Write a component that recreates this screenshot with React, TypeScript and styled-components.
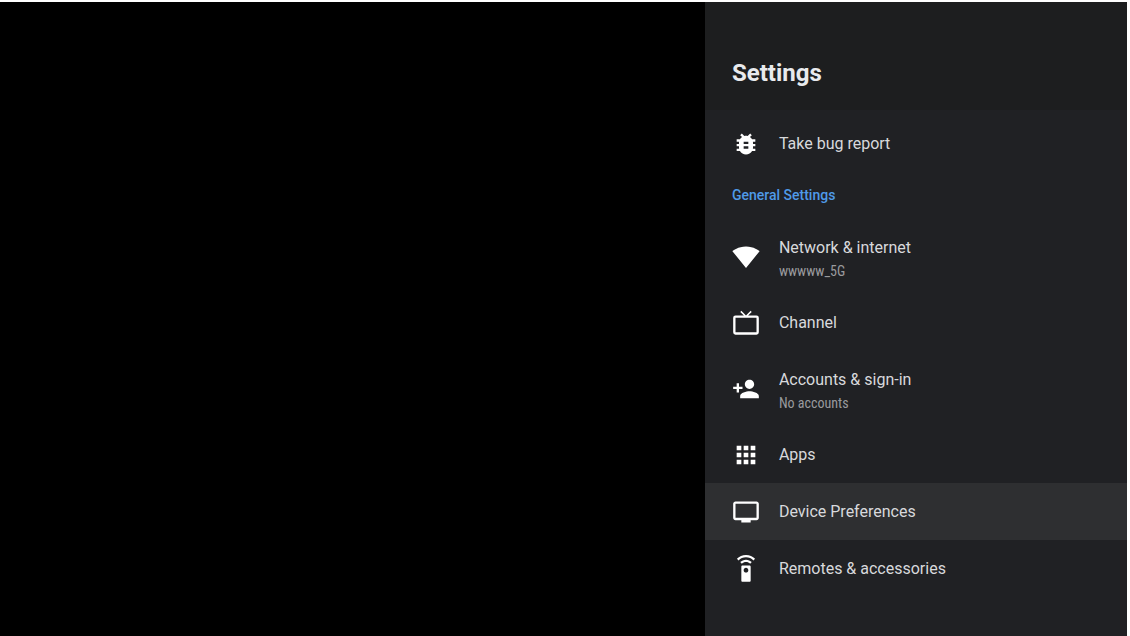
import React from 'react';
import styled, { createGlobalStyle } from 'styled-components';

const GlobalStyle = createGlobalStyle`
  *, *::before, *::after { box-sizing: border-box; }
  html, body, #root { height: 100%; margin: 0; }
  body {
    background: #ffffff;
    font-family: Roboto, "Liberation Sans", sans-serif;
    -webkit-font-smoothing: antialiased;
  }
`;

const Screen = styled.div`
  display: flex;
  min-height: 100%;
  border: solid #ffffff;
  border-width: 2px 3px 0 0;
`;

const Stage = styled.main`
  flex: 167;
  background: #000000;
`;

const Panel = styled.aside`
  display: flex;
  flex-direction: column;
  flex: 100;
  background: #202124;
`;

const Header = styled.header`
  padding: 55px 27px 21px;
  background: #1d1e1f;
`;

const Title = styled.h1`
  margin: 0;
  color: #e8eaed;
  font-size: 24px;
  font-weight: 700;
  line-height: 32px;
`;

const Menu = styled.nav`
  padding: 5px 0;
`;

const SectionTitle = styled.h2`
  margin: 0;
  padding: 0 27px;
  color: #4f9ae8;
  font-size: 14px;
  font-weight: 500;
  line-height: 47px;
`;

const Row = styled.button<{ $tall?: boolean; $focused?: boolean }>`
  display: flex;
  align-items: center;
  gap: 19px;
  width: 100%;
  height: ${(p) => (p.$tall ? 75 : 57)}px;
  padding: 0 27px;
  border: 0;
  background: ${(p) => (p.$focused ? '#2e2f31' : 'transparent')};
  color: #d8d9dc;
  font-family: inherit;
  text-align: left;
`;

const Icon = styled.svg`
  flex: none;
  width: 28px;
  height: 28px;
  fill: #ffffff;
`;

const Texts = styled.span<{ $tall?: boolean }>`
  display: flex;
  flex-direction: column;
  padding-top: ${(p) => (p.$tall ? 5 : 0)}px;
`;

const Label = styled.span`
  font-size: 16px;
  line-height: 24px;
`;

const Summary = styled.span`
  color: #9a9b9e;
  font-family: "Roboto Condensed", Roboto, sans-serif;
  font-size: 14px;
  line-height: 22px;
`;

const icons = {
  bug: 'M20 8h-2.81a5.985 5.985 0 0 0-1.82-1.96L17 4.41 15.59 3l-2.17 2.17C12.96 5.06 12.49 5 12 5s-.96.06-1.41.17L8.41 3 7 4.41l1.62 1.63C7.88 6.55 7.26 7.22 6.81 8H4v2h2.09c-.05.33-.09.66-.09 1v1H4v2h2v1c0 .34.04.67.09 1H4v2h2.81c1.04 1.79 2.97 3 5.19 3s4.15-1.21 5.19-3H20v-2h-2.09c.05-.33.09-.66.09-1v-1h2v-2h-2v-1c0-.34-.04-.67-.09-1H20V8zm-6 8h-4v-2h4v2zm0-4h-4v-2h4v2z',
  wifi: 'M12.01 21.49L23.64 7c-.45-.34-4.93-4-11.64-4C5.28 3 .81 6.66.36 7l11.63 14.49.01.01.01-.01z',
  channel: 'M21 5.6h-7.2l3.1-3.1-.9-.9-4 4-4-4-.9.9 3.1 3.1H3a2 2 0 0 0-2 2V20a2 2 0 0 0 2 2h18a2 2 0 0 0 2-2V7.600a2 2 0 0 0-2-2zM21 20H3V7.600h18z',
  account: 'M15 12c2.21 0 4-1.790 4-4s-1.790-4-4-4-4 1.790-4 4 1.790 4 4 4zm-9-2V7H4v3H1v2h3v3h2v-3h3v-2H6zm9 4c-2.670 0-8 1.340-8 4v2h16v-2c0-2.660-5.330-4-8-4z',
  apps: 'M4 8h4V4H4v4zm6 12h4v-4h-4v4zm-6 0h4v-4H4v4zm0-6h4v-4H4v4zm6 0h4v-4h-4v4zm6-10v4h4V4h-4zm-6 4h4V4h-4v4zm6 6h4v-4h-4v4zm0 6h4v-4h-4v4z',
  device: 'M21 3H3c-1.100 0-2 .9-2 2v12c0 1.100.9 2 2 2h5v2h8v-2h5c1.100 0 2-.9 2-2V5c0-1.100-.9-2-2-2zm0 14H3V5h18v12z',
  remote: 'M15 9H9c-.55 0-1 .45-1 1v12c0 .55.45 1 1 1h6c.55 0 1-.45 1-1V10c0-.55-.45-1-1-1zm-3 6c-1.100 0-2-.9-2-2s.9-2 2-2 2 .9 2 2-.9 2-2 2zM7.050 6.050l1.410 1.410C9.370 6.560 10.620 6 12 6s2.630.56 3.540 1.460l1.410-1.410C15.680 4.780 13.930 4 12 4s-3.680.78-4.950 2.050zM12 0C8.960 0 6.210 1.230 4.220 3.220l1.410 1.410C7.260 3.010 9.510 2 12 2s4.740 1.010 6.360 2.640l1.410-1.410C17.790 1.230 15.040 0 12 0z',
};

interface ItemProps {
  icon: keyof typeof icons;
  label: string;
  summary?: string;
  focused?: boolean;
}

function Item({ icon, label, summary, focused }: ItemProps) {
  return (
    <Row type="button" $tall={!!summary} $focused={focused}>
      <Icon viewBox="0 0 24 24" aria-hidden="true">
        <path d={icons[icon]} />
      </Icon>
      <Texts $tall={!!summary}>
        <Label>{label}</Label>
        {summary && <Summary>{summary}</Summary>}
      </Texts>
    </Row>
  );
}

export default function App() {
  return (
    <>
      <GlobalStyle />
      <Screen>
        <Stage />
        <Panel>
          <Header>
            <Title>Settings</Title>
          </Header>
          <Menu aria-label="Settings">
            <Item icon="bug" label="Take bug report" />
            <SectionTitle>General Settings</SectionTitle>
            <Item icon="wifi" label="Network &amp; internet" summary="wwwww_5G" />
            <Item icon="channel" label="Channel" />
            <Item icon="account" label="Accounts &amp; sign-in" summary="No accounts" />
            <Item icon="apps" label="Apps" />
            <Item icon="device" label="Device Preferences" focused />
            <Item icon="remote" label="Remotes &amp; accessories" />
          </Menu>
        </Panel>
      </Screen>
    </>
  );
}
